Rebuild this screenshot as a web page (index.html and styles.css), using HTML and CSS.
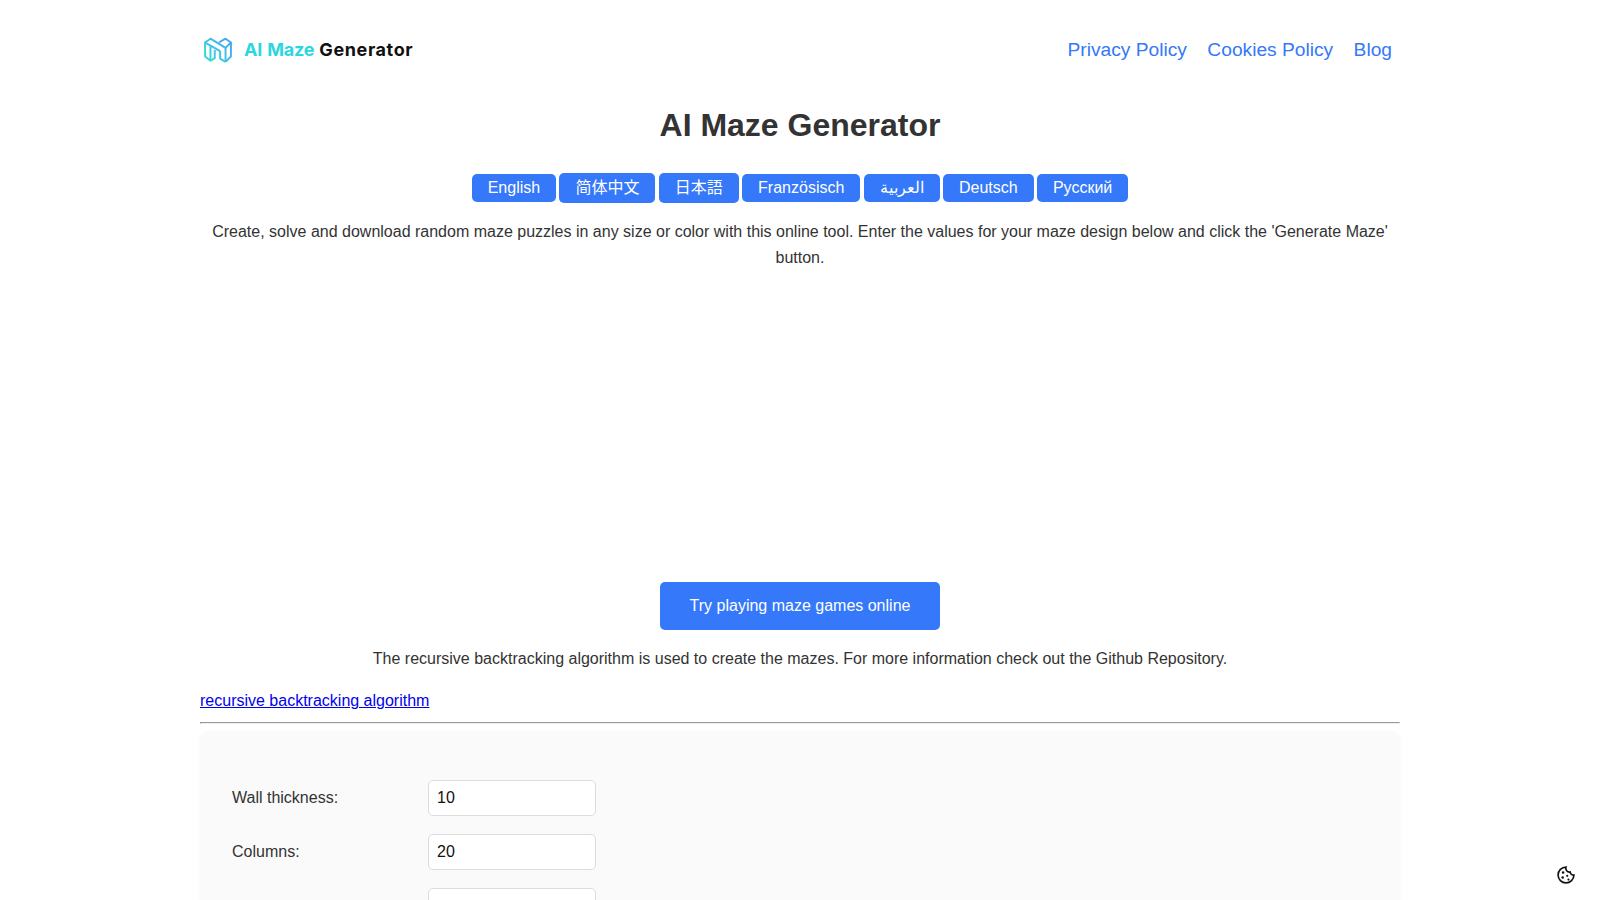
FILE: index.html
```html
<!DOCTYPE html>
<html lang="en">
<head>
  <meta charset="UTF-8">
  <meta name="viewport" content="width=device-width, initial-scale=1.0">
  <title>AI Maze Generator</title>
  <link rel="stylesheet" href="styles.css">
</head>
<body>
  <div class="container">
    <!-- Header -->
    <header class="site-header">
      <a class="logo" href="#">
        <svg class="logo-icon" viewBox="0 0 26 24" width="28" height="26" fill="none" stroke="url(#logo-grad)" stroke-width="1.800" stroke-linejoin="round">
          <defs>
            <linearGradient id="logo-grad" gradientUnits="userSpaceOnUse" x1="0" y1="24" x2="26" y2="0">
              <stop offset="0" stop-color="#2fe6d6"/>
              <stop offset="1" stop-color="#4a9cf5"/>
            </linearGradient>
          </defs>
          <path d="M1 5v13l5 4V8z"/>
          <path d="M1 5l5-3.500L20 10v13"/>
          <path d="M6 8l9 5"/>
          <path d="M14 5l6-3.500L25 5l-5 5"/>
          <path d="M25 5v13l-5 5"/>
          <path d="M6 22l4-2.500V12"/>
          <path d="M15 13v7l5 3"/>
        </svg>
        <span class="logo-text"><span class="logo-accent">AI Maze</span> <span class="logo-dark">Generator</span></span>
      </a>
      <nav class="site-nav">
        <a href="#">Privacy Policy</a>
        <a href="#">Cookies Policy</a>
        <a href="#">Blog</a>
      </nav>
    </header>

    <h1>AI Maze Generator</h1>

    <!-- Language buttons -->
    <div class="lang-list">
      <a class="lang" href="#">English</a>
      <a class="lang lang-tall" href="#">简体中文</a>
      <a class="lang lang-tall" href="#">日本語</a>
      <a class="lang" href="#">Französisch</a>
      <a class="lang" href="#">العربية</a>
      <a class="lang" href="#">Deutsch</a>
      <a class="lang" href="#">Русский</a>
    </div>

    <p class="intro">Create, solve and download random maze puzzles in any size or color with this online tool. Enter the values for your maze design below and click the 'Generate Maze' button.</p>

    <div class="ad-slot"></div>

    <div class="cta-row">
      <a class="cta" href="#">Try playing maze games online</a>
    </div>

    <p class="algo-note">The recursive backtracking algorithm is used to create the mazes. For more information check out the Github Repository.</p>

    <p class="algo-link"><a href="#">recursive backtracking algorithm</a></p>
    <hr>

    <!-- Maze form -->
    <form class="maze-form">
      <div class="field">
        <label for="wall">Wall thickness:</label>
        <input type="number" id="wall" value="10">
      </div>
      <div class="field">
        <label for="cols">Columns:</label>
        <input type="number" id="cols" value="20">
      </div>
      <div class="field">
        <label for="rows"></label>
        <input type="number" id="rows">
      </div>
    </form>
  </div>

  <button class="cookie-btn" type="button" aria-label="Cookie settings">
    <svg viewBox="0 0 24 24" width="20" height="20" fill="none" stroke="#111" stroke-width="2">
      <path d="M12 2.500a9.500 9.500 0 1 0 9.500 9.500 4 4 0 0 1-4.500-3.500 4.500 4.500 0 0 1-5-6z"/>
      <circle cx="8.500" cy="9" r="1.500" fill="#111" stroke="none"/>
      <circle cx="8" cy="15" r="1.500" fill="#111" stroke="none"/>
      <circle cx="13.500" cy="13" r="1.300" fill="#111" stroke="none"/>
      <circle cx="15" cy="17.500" r="1.300" fill="#111" stroke="none"/>
    </svg>
  </button>
</body>
</html>
```

FILE: styles.css
```css
/* General Styles */
html, body {
  height: 900px;
  overflow: hidden;
}

body {
  font-family: "Liberation Sans", Arial, "Noto Sans CJK JP", sans-serif;
  font-size: 16px;
  line-height: 1.6;
  color: #333;
  background: #fff;
  margin: 0;
}

.container {
  width: 1200px;
  margin: 0 auto;
}

/* Header */
.site-header {
  display: flex;
  justify-content: space-between;
  align-items: center;
  height: 100px;
}

.logo {
  display: flex;
  align-items: center;
  gap: 12px;
  padding-left: 4px;
  text-decoration: none;
}

.logo-text {
  font-family: Inter, sans-serif;
  font-size: 18px;
  font-weight: 700;
  letter-spacing: -0.2px;
  word-spacing: 1px;
  color: #111;
}

.logo-accent {
  color: #2bd6e0;
}

.logo-dark {
  letter-spacing: 0.6px;
}

.site-nav {
  display: flex;
  gap: 20.4px;
  padding-right: 8px;
}

.site-nav a {
  font-size: 19.2px;
  color: #3578fa;
  text-decoration: none;
}

h1 {
  font-size: 32px;
  line-height: 1.2;
  text-align: center;
  margin: 6px 0 29px;
}

/* Language buttons */
.lang-list {
  display: flex;
  justify-content: center;
  align-items: baseline;
  gap: 3.300px;
  height: 30px;
}

.lang {
  padding: 5px 16px;
  line-height: 18px;
  background: #3578fa;
  color: #fff;
  border-radius: 5px;
  text-decoration: none;
}

.lang-tall {
  padding: 6px 16px;
}

.intro {
  text-align: center;
  margin: 16px 0 0;
}

.ad-slot {
  height: 280px;
}

.cta-row {
  text-align: center;
  margin-top: 31px;
}

.cta {
  display: inline-block;
  padding: 11.500px 29.500px;
  background: #3578fa;
  color: #fff;
  border-radius: 5px;
  text-decoration: none;
}

.algo-note {
  text-align: center;
  margin: 16px 0 0;
}

.algo-link {
  margin: 16.500px 0 0;
}

.algo-link a {
  color: #0000ee;
}

hr {
  margin: 8px 0 8px;
}

/* Maze form */
.maze-form {
  background: #fafafa;
  border-radius: 8px;
  padding: 48px 32px;
  box-shadow: 0 0 4px rgba(0, 0, 0, 0.03);
}

.field {
  display: flex;
  align-items: center;
  margin-bottom: 18px;
}

.field label {
  width: 196px;
}

.field input {
  width: 168px;
  height: 36px;
  box-sizing: border-box;
  padding: 0 8px;
  font-family: "Liberation Sans", Arial, sans-serif;
  font-size: 16px;
  color: #111;
  background: #fff;
  border: 1px solid #ddd;
  border-radius: 5px;
}

/* Cookie button */
.cookie-btn {
  position: fixed;
  right: 24px;
  bottom: 15px;
  width: 20px;
  height: 20px;
  padding: 0;
  background: none;
  border: none;
}
```
